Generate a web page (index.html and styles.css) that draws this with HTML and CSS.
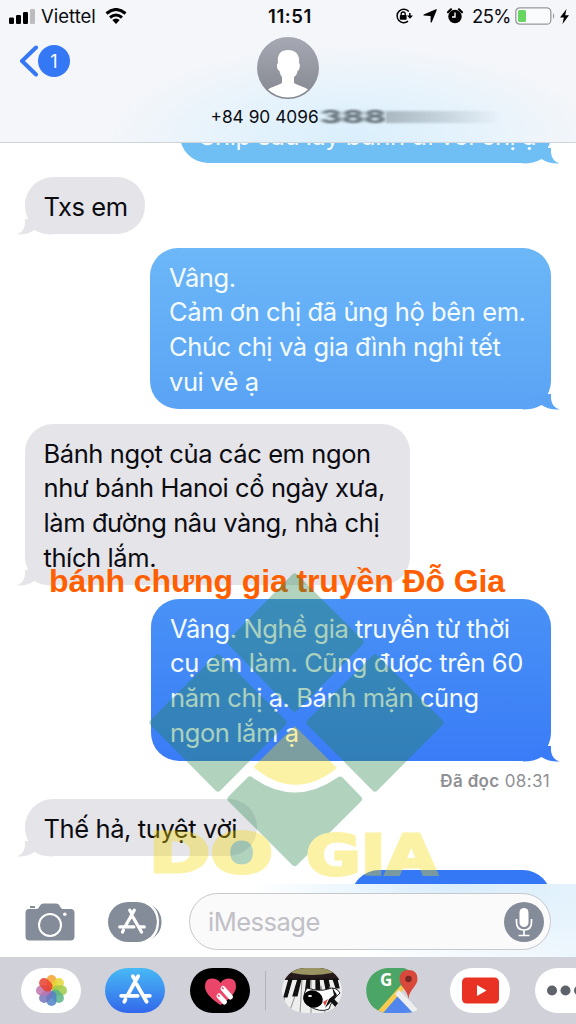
FILE: index.html
```html
<!DOCTYPE html>
<html lang="vi">
<head>
<meta charset="utf-8">
<title>Tin nhắn</title>
<link rel="stylesheet" href="styles.css">
</head>
<body>
<svg class="defs" aria-hidden="true">
  <symbol id="tail" viewBox="0 0 38 30"><path d="M28 14V19Q29 27 36.500 29.500Q26 30 18.500 25Q11 29.500 0 29.500V26L20 14Z"/></symbol>
  <symbol id="store" viewBox="0 0 32 32"><g fill="none" stroke="currentColor" stroke-width="3.600" stroke-linecap="round"><path d="M13.500 3L16 7M18.500 3L8.500 21M17 10.500L26.500 27M2.500 21.500H18M24.500 21.500H29.500M6.500 25L5.500 27"/></g></symbol>
</svg>
<main class="phone">
  <header class="header">
    <div class="status">
      <svg class="signal" viewBox="0 0 26 15"><g fill="#000"><rect x="0" y="8.500" width="5" height="6.500" rx="1.200"/><rect x="7" y="6" width="5" height="9" rx="1.200"/><rect x="14" y="3" width="5" height="12" rx="1.200"/></g><rect x="21" y="0" width="5" height="15" rx="1.200" fill="#bcbcbf"/></svg>
      <span class="carrier">Viettel</span>
      <svg class="wifi" viewBox="0 0 22 16"><g fill="none" stroke="#000" stroke-width="3"><path d="M1.500 5.500Q11-2.500 20.500 5.500"/><path d="M5 9.500Q11 4.500 17 9.500"/></g><path d="M7.300 12Q11 9 14.700 12L11 16Z"/></svg>
      <time class="clock">11:51</time>
      <div class="status-right">
        <svg class="lock" viewBox="0 0 18 16"><path d="M13.800 3.500A6.700 6.700 0 1 0 13 13.200M14.800 5V8.500" fill="none" stroke="#000" stroke-width="1.500"/><path d="M12 7.500H18L15 10.800Z"/><rect x="4.800" y="7" width="6.800" height="4.800" rx=".8"/><path d="M6.200 7.500V6a2 2 0 0 1 4 0V7.500" fill="none" stroke="#000" stroke-width="1.300"/></svg>
        <svg class="arrow" viewBox="0 0 14 14"><path d="M13.200 .8L8.200 13V6.500L1 6Z" stroke="#000" stroke-width="1.200" stroke-linejoin="round"/></svg>
        <svg class="alarm" viewBox="0 0 16 16"><circle cx="8" cy="8.500" r="6.700"/><path d="M1 4.200L4 1.300M15 4.200L12 1.300" stroke="#000" stroke-width="2.200" stroke-linecap="round"/><path d="M8 4.500V9H5" fill="none" stroke="#fff" stroke-width="1.400"/></svg>
        <span class="percent">25%</span>
        <svg class="battery" viewBox="0 0 40 18"><rect x=".8" y=".8" width="35" height="16.400" rx="4" fill="#fafbfd" stroke="#97989c" stroke-width="1.300"/><rect x="3" y="3" width="8" height="12" rx="1.500" fill="#67d561"/><path d="M38 6Q40.500 9 38 12Z" fill="#97989c"/></svg>
        <svg class="bolt" viewBox="0 0 9 15"><path d="M6.500 0L0 8.500H3.800L2.500 15L9 6.200H5.200Z"/></svg>
      </div>
    </div>
    <div class="nav">
      <div class="back">
        <svg class="chevron" viewBox="0 0 20 32"><path d="M17 2.500L3 16L17 29.500" fill="none" stroke="#3478f6" stroke-width="4" stroke-linecap="round" stroke-linejoin="round"/></svg>
        <span class="unread">1</span>
      </div>
      <svg class="avatar" viewBox="0 0 62 62">
        <defs><linearGradient id="av" x2="0" y2="1"><stop stop-color="#a6a8b3"/><stop offset="1" stop-color="#858790"/></linearGradient><clipPath id="avc"><circle cx="31" cy="31" r="29.500"/></clipPath></defs>
        <circle cx="31" cy="31" r="31" fill="url(#av)"/>
        <path clip-path="url(#avc)" fill="#fff" d="M31 13C23 13 20 18 21 26C19 27 20 33 22.500 34C23 37 24 39 25 40V46C20 49 13 50 9 54L16 62H46L53 54C49 50 42 49 37 46V40C39 39 40 37 40.500 34C43 33 43.500 27 42 26C43 18 39 13 31 13Z"/>
      </svg>
    </div>
    <div class="contact"><span class="number">+84 90 4096</span><span class="blurred">388</span><span class="smear"></span></div>
  </header>

  <section class="chat">
    <div class="bubble out b1"><span>Ship sau lấy bánh đi với chị ạ</span><svg class="tail"><use href="#tail"/></svg></div>
    <div class="bubble in b2"><span>Txs em</span><svg class="tail"><use href="#tail"/></svg></div>
    <div class="bubble out b3"><span>Vâng.</span><span>Cảm ơn chị đã ủng hộ bên em.</span><span>Chúc chị và gia đình nghỉ tết</span><span>vui vẻ ạ</span><svg class="tail"><use href="#tail"/></svg></div>
    <div class="bubble in b4"><span>Bánh ngọt của các em ngon</span><span>như bánh Hanoi cổ ngày xưa,</span><span>làm đường nâu vàng, nhà chị</span><span>thích lắm.</span><svg class="tail"><use href="#tail"/></svg></div>
    <div class="bubble out b5"><span>Vâng. Nghề gia truyền từ thời</span><span>cụ em làm. Cũng được trên 60</span><span>năm chị ạ. Bánh mặn cũng</span><span>ngon lắm ạ</span><svg class="tail"><use href="#tail"/></svg></div>
    <div class="receipt"><b>Đã đọc</b> 08:31</div>
    <div class="bubble in b6"><span>Thế hả, tuyệt vời</span><svg class="tail"><use href="#tail"/></svg></div>
    <div class="bubble out b7"></div>
    <div class="caption">bánh chưng gia truyền Đỗ Gia</div>
    <svg class="watermark" viewBox="140 565 310 319">
      <g opacity=".35">
        <g fill="#238448" stroke="#238448" stroke-width="7" stroke-linejoin="round">
          <path d="M294.700 577L360 642L294.700 708L231 642Z"/>
          <path d="M218 658L283 722.500L218 788L153 722.500Z"/>
          <path d="M375 658L440 722.500L375 788L310 722.500Z"/>
          <path d="M250 780Q294 812 340 780L358.500 799L294.700 862.500L231 799Z"/>
        </g>
        <path d="M294.700 726L337 768Q295 802 253.500 767Z" fill="#f7db02"/>
        <ellipse cx="242" cy="852" rx="20" ry="13" fill="#238448"/>
        <g class="brand"><text x="149" y="871.500" textLength="124" lengthAdjust="spacingAndGlyphs">DO</text><text x="306" y="873.500" textLength="131" lengthAdjust="spacingAndGlyphs">GIA</text></g>
      </g>
    </svg>
  </section>

  <section class="composer">
    <svg class="camera" viewBox="0 0 50 38"><path fill="#858c99" d="M4 6H12Q14 5 15 2.500Q16 .5 18.500 .5H31Q33.500 .5 34.500 2.500Q36 6 38 6H45.500Q49.500 6 49.500 10V33.500Q49.500 37.500 45.500 37.500H4.500Q.5 37.500 .5 33.500V10Q.5 6 4 6ZM5 3H10V5H5Z"/><circle cx="25" cy="22" r="11" fill="none" stroke="#fff" stroke-width="2"/><circle cx="39.800" cy="11.300" r="1.700" fill="#fff"/></svg>
    <svg class="apps" viewBox="0 0 54 40"><rect x="0" y="0" width="49" height="40" rx="20" fill="#858c99"/><path d="M40 1.500Q53.500 7 53.500 20T40 38.500Q50 32 50 20T40 1.500" fill="#858c99"/><path d="M38 .8Q50 6 50 20T38 39.200" fill="none" stroke="#fff" stroke-width="2"/><svg x="9.500" y="5.500" width="29" height="29" color="#fff"><use href="#store"/></svg></svg>
    <div class="field"><span class="placeholder">iMessage</span>
      <svg class="mic" viewBox="0 0 40 40"><circle cx="20" cy="20" r="20" fill="#858c99"/><rect x="15.500" y="6" width="9" height="19" rx="4.500" fill="#fff"/><path d="M12.500 17V20Q12.500 28 20 28T27.500 20V17M20 28V33.500M14.500 33.500H25.500" fill="none" stroke="#fff" stroke-width="1.700"/></svg>
    </div>
  </section>

  <footer class="dock">
    <svg class="app" viewBox="0 0 60 45"><rect width="60" height="45" rx="22.500" fill="#fff"/>
      <g fill-opacity=".85"><rect x="25.500" y="7" width="10" height="15" rx="5" fill="#f6a12c"/><rect x="25.500" y="7" width="10" height="15" rx="5" fill="#e2d735" transform="rotate(45 30.500 22.500)"/><rect x="25.500" y="7" width="10" height="15" rx="5" fill="#9dcb49" transform="rotate(90 30.500 22.500)"/><rect x="25.500" y="7" width="10" height="15" rx="5" fill="#58b386" transform="rotate(135 30.500 22.500)"/><rect x="25.500" y="7" width="10" height="15" rx="5" fill="#4f83c8" transform="rotate(180 30.500 22.500)"/><rect x="25.500" y="7" width="10" height="15" rx="5" fill="#7673bb" transform="rotate(225 30.500 22.500)"/><rect x="25.500" y="7" width="10" height="15" rx="5" fill="#bd76ad" transform="rotate(270 30.500 22.500)"/><rect x="25.500" y="7" width="10" height="15" rx="5" fill="#e8402f" transform="rotate(315 30.500 22.500)"/></g>
    </svg>
    <svg class="app" viewBox="0 0 60 45"><defs><linearGradient id="as" x2="0" y2="1"><stop stop-color="#48b9f5"/><stop offset="1" stop-color="#3268eb"/></linearGradient></defs><rect width="60" height="45" rx="22.500" fill="url(#as)"/><svg x="13.500" y="5" width="34" height="34" color="#fff"><use href="#store"/></svg></svg>
    <svg class="app" viewBox="0 0 60 45"><rect width="60" height="45" rx="22.500"/><path d="M30.500 37Q15 27 15 18.500Q15 10.500 22 10.500Q28 10.500 30.500 15Q33 10.500 39 10.500Q46 10.500 46 18.500Q46 27 30.500 37Z" fill="#eb4569"/><g stroke="#fff" stroke-width="5" stroke-linecap="round"><path d="M29 28L34.500 34M33 20.500L40.500 29"/></g><path d="M28 27L29.500 28.500M32 19.500L33.500 21" stroke="#eb4569" stroke-width="1.500"/></svg>
    <i class="divider"></i>
    <svg class="app" viewBox="0 0 60 45"><defs><clipPath id="pill"><rect width="60" height="45" rx="22.500"/></clipPath></defs><g clip-path="url(#pill)"><rect width="60" height="45" fill="#eee"/><path d="M0 0H60V12H0Z" fill="#251a1b"/><path d="M10 0H50V5Q30 9 10 5Z" fill="#9a9362"/><path d="M7 11L2 29H5L10 11ZM16 11L11 28H15L19 11ZM25 11L23 27H27L28 11ZM34 11V22H38L37 11ZM42 11L44 21H48L46 11ZM51 11L54 20H57L55 11Z" fill="#111" stroke="#111" stroke-width="1.200"/><path d="M3 29L0 38M13 28L7 45M20 12L18 45M29 12V45M39 18L43 45M47 18L54 40" stroke="#777" stroke-width=".8"/><path d="M25 20Q38 24 46 21Q54 18 58 25Q49 33 47 41Q38 45 27 38Q18 30 25 20Z" fill="#fff" stroke="#222"/><ellipse cx="31" cy="31" rx="10" ry="8.500" transform="rotate(20 31 31)"/><path d="M50 19L55 27L52 31L58 37L55 41L49 34L43 40L47 31L52 27Z" fill="#111"/><path d="M41 34L46 31L43 38Z" fill="#d44c4b"/><ellipse cx="28" cy="28" rx="2" ry="1" fill="#fff"/></g></svg>
    <svg class="app" viewBox="0 0 60 45"><defs><clipPath id="map"><path d="M22 0H38Q43 1 47 8V35L52 42Q47 45 38 45H22C-7 43-7 2 22 0Z"/></clipPath></defs><g clip-path="url(#map)"><rect width="60" height="45" fill="#4ba566"/><path d="M34 22L60 0V45H34Z" fill="#d1d2d9"/><path d="M12 45L30 24L49 45Z" fill="#5186ee"/><path d="M10 45L35 17L38 21L17 45Z" fill="#f8ca50"/><path d="M29 26L33 22L53 42L48 46Z" fill="#eeeef0"/></g><path d="M42.500 2Q51.500 2 51.500 11C51.500 18 43 22 42.500 31C41.500 22 33.500 18 33.500 11Q33.500 2 42.500 2Z" fill="#d8493c"/><circle cx="42.500" cy="11" r="3.200" fill="#7b2723"/><text class="google" x="14" y="18">G</text></svg>
    <svg class="app" viewBox="0 0 60 45"><rect width="60" height="45" rx="22.500" fill="#fff"/><rect x="12" y="9.500" width="37" height="26" rx="4.500" fill="#e93223"/><path d="M27 17V28L36.500 22.500Z" fill="#fff"/></svg>
    <svg class="app" viewBox="0 0 60 45"><rect width="60" height="45" rx="22.500" fill="#fff"/><g fill="#5e626b"><circle cx="17" cy="22.500" r="5"/><circle cx="30.500" cy="22.500" r="5"/><circle cx="44" cy="22.500" r="5"/></g></svg>
  </footer>
</main>
</body>
</html>
```
FILE: styles.css
```css
* { box-sizing: border-box; }
body { margin: 0; font-family: Inter, "Noto Sans", sans-serif; color: #0b0b10; }
svg { display: block; flex: none; }
.defs { position: absolute; width: 0; height: 0; }
.phone { width: 576px; height: 1024px; display: flex; flex-direction: column; overflow: hidden; background: #fff; }

.header {
  height: 143px; flex: none; border-bottom: 1.500px solid #cfd4da; display: flex; flex-direction: column;
  background: radial-gradient(ellipse 250px 95px at 350px 138px, #daeffc 0%, #e3f2fc 40%, rgba(245,246,249,0) 100%), #f5f6f9;
}
.status { height: 32px; display: flex; align-items: center; padding-left: 9px; font-size: 19px; }
.signal { width: 26px; height: 15px; }
.carrier { width: 56px; margin-left: 6px; font-size: 18.500px; white-space: nowrap; }
.wifi { width: 22px; height: 16px; margin-left: 8px; }
.clock { width: 60px; margin-left: 133px; text-align: center; font-weight: 600; font-size: 18.500px; letter-spacing: .6px; }
.status-right { display: flex; align-items: center; margin-left: 75px; }
.lock { width: 18px; height: 16px; }
.arrow { width: 14px; height: 14px; margin-left: 10px; }
.alarm { width: 16px; height: 16px; margin-left: 10px; }
.percent { width: 38px; margin-left: 9px; font-size: 18.500px; letter-spacing: -.6px; white-space: nowrap; }
.battery { width: 40px; height: 18px; margin-left: 5px; }
.bolt { width: 9px; height: 15px; margin-left: 5px; }
.nav { height: 70px; display: flex; align-items: flex-start; padding-top: 5px; }
.back { width: 257px; padding: 8px 0 0 19px; display: flex; align-items: center; }
.chevron { width: 20px; height: 32px; }
.unread { width: 32px; height: 32px; margin-left: -1px; border-radius: 50%; background: #3478f6; color: #fff; display: flex; align-items: center; justify-content: center; font-size: 18px; }
.avatar { width: 62px; height: 62px; }
.contact { display: flex; align-items: center; padding-left: 210.500px; height: 30px; font-size: 17.300px; line-height: 30px; }
.number { width: 109px; white-space: nowrap; }
.blurred { width: 66px; color: #4a555d; font-weight: 700; font-size: 17px; transform: scaleX(2); transform-origin: left; filter: blur(1.200px); }
.smear { width: 115px; height: 12px; background: linear-gradient(90deg, #a9b7c0, rgba(200,218,229,0)); filter: blur(1px); }

.chat { position: relative; height: 741px; flex: none; display: flex; flex-direction: column; align-items: flex-start; overflow: hidden; padding: 0 25px; }
.bubble { position: relative; border-radius: 28px; padding: 12.500px 18px 8px 19px; font-size: 25.500px; line-height: 34.750px; letter-spacing: -.4px; flex: none; }
.bubble span { display: block; white-space: nowrap; }
.in { background: #e4e4e9; fill: #e4e4e9; padding-left: 18.500px; }
.out { align-self: flex-end; color: #f4fbff; }
.tail { position: absolute; width: 38px; height: 30px; right: -10px; bottom: -.5px; }
.in .tail { right: auto; left: -10px; transform: scaleX(-1); }
.b1 { width: 371px; height: 57px; margin-top: -37px; background: #70bff4; fill: #70bff4; }
.b2 { width: 120px; height: 57px; margin-top: 14px; }
.b3 { width: 401px; height: 161px; margin-top: 14px; background: linear-gradient(#6bb7f7, #5aa3f5); fill: #5aa3f5; }
.b4 { width: 385px; height: 161px; margin-top: 15px; }
.b5 { width: 400px; height: 162px; margin-top: 14px; background: linear-gradient(#4992f6, #3a7cf7); fill: #3a7cf7; }
.receipt { align-self: flex-end; height: 38px; line-height: 40px; font-size: 17px; letter-spacing: .35px; color: #8f8f94; margin-right: 1px; white-space: nowrap; }
.receipt b { font-weight: 600; }
.b6 { width: 232px; height: 57px; }
.b7 { width: 200px; height: 57px; margin-top: 14px; background: #3478f6; }
.caption { position: absolute; left: 49px; top: 419px; font: bold 32px/38px "Liberation Sans", sans-serif; letter-spacing: -.1px; color: #ff5f00; white-space: nowrap; }
.watermark { position: absolute; left: 140px; top: 422px; width: 310px; height: 319px; }
.brand { font: bold 55px "DejaVu Sans", sans-serif; fill: #f7db02; stroke: #f7db02; stroke-width: 3px; }

.composer { height: 73px; flex: none; display: flex; align-items: center; padding: 2px 25px 0; background: radial-gradient(ellipse 210px 75px at 460px 0, #d7edfb, rgba(255,255,255,0)), linear-gradient(90deg, #fff 60%, #edf6fd); }
.camera { width: 50px; height: 38px; }
.apps { width: 54px; height: 40px; margin-left: 33px; }
.field { width: 363px; height: 57px; margin-left: 27px; border: 1.500px solid #c7c8cc; border-radius: 29px; background: #fafafa; display: flex; align-items: center; justify-content: space-between; padding: 0 6px 0 18px; }
.placeholder { color: #c0c0c6; font-size: 25.500px; letter-spacing: -.5px; }
.mic { width: 40px; height: 40px; }
.dock { height: 67px; flex: none; background: #d1d2d9; display: flex; align-items: center; padding-left: 21px; }
.app { width: 60px; height: 45px; margin-right: 24.300px; }
.divider { width: 1.500px; height: 39px; background: #b2b3b9; margin: 0 15.500px 0 -9px; flex: none; }
.google { font: bold 17px "Open Sans", sans-serif; fill: #fff; }
```
